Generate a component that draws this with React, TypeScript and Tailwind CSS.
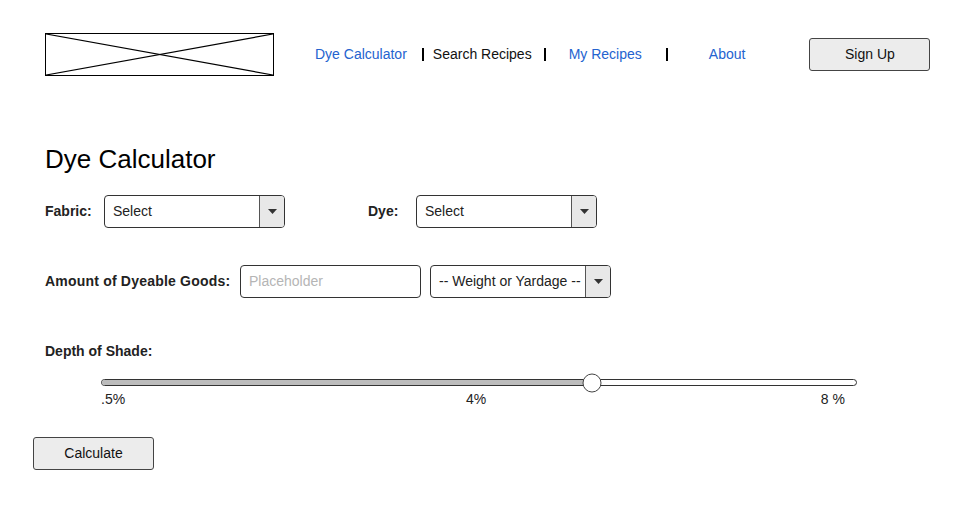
import React from "react";

const font = { fontFamily: '"Liberation Sans", Arial, sans-serif' };

function Caret() {
  return (
    <svg width="9" height="5" viewBox="0 0 9 5">
      <path d="M0 0 L9 0 L4.5 5 Z" fill="#333" />
    </svg>
  );
}

function Select({ label, width }: { label: string; width: string }) {
  return (
    <div className={`flex h-[33px] ${width} overflow-hidden rounded-[4px] border border-[#333] bg-white`}>
      <div className="flex flex-1 items-center overflow-hidden whitespace-nowrap pl-2 text-[14px] text-[#222]">{label}</div>
      <div className="flex w-[25px] shrink-0 items-center justify-center border-l border-[#555] bg-[#e8e8e8]">
        <Caret />
      </div>
    </div>
  );
}

export default function App() {
  return (
    <div className="relative h-[516px] w-[969px] bg-white text-black" style={font}>
      {/* header */}
      <div className="flex items-center pl-[45px] pt-[33px]">
        <div className="relative h-[43px] w-[229px] border border-black">
          <svg className="absolute inset-0" width="227" height="41" viewBox="0 0 227 41" preserveAspectRatio="none">
            <line x1="0" y1="0" x2="227" y2="41" stroke="#000" strokeWidth="1.2" />
            <line x1="0" y1="41" x2="227" y2="0" stroke="#000" strokeWidth="1.2" />
          </svg>
        </div>
        <div className="ml-[41px] flex items-center text-[14px]">
          <span className="text-[#2463cf]">Dye Calculator</span>
          <span className="ml-[15px] h-[13px] w-[2px] bg-black" />
          <span className="ml-[9px] text-[#111]">Search Recipes</span>
          <span className="ml-[12px] h-[13px] w-[2px] bg-black" />
          <span className="ml-[23px] text-[#2463cf]">My Recipes</span>
          <span className="ml-[24px] h-[13px] w-[2px] bg-black" />
          <span className="ml-[41px] text-[#2463cf]">About</span>
        </div>
        <button className="ml-[64px] flex h-[33px] w-[121px] items-center justify-center rounded-[3px] border border-[#444] bg-[#ececec] text-[14px] text-[#111]">
          Sign Up
        </button>
      </div>

      {/* main */}
      <div className="pl-[45px] pt-[68px]">
        <h1 className="text-[26px] leading-[30px] text-black">Dye Calculator</h1>

        <div className="mt-[21px] flex items-center">
          <span className="w-[59px] text-[14px] font-bold text-[#222]">Fabric:</span>
          <Select label="Select" width="w-[181px]" />
          <span className="ml-[83px] w-[48px] text-[14px] font-bold text-[#222]">Dye:</span>
          <Select label="Select" width="w-[181px]" />
        </div>

        <div className="mt-[37px] flex items-center">
          <span className="w-[195px] text-[14px] font-bold tracking-[0.2px] text-[#222]">Amount of Dyeable Goods:</span>
          <div className="flex h-[33px] w-[181px] items-center rounded-[4px] border border-[#333] bg-white pl-2 text-[14px] text-[#b5b5b5]">
            Placeholder
          </div>
          <div className="ml-[9px]">
            <Select label="-- Weight or Yardage --" width="w-[181px]" />
          </div>
        </div>

        <div className="mt-[43px] text-[14px] font-bold text-[#222]">Depth of Shade:</div>

        <div className="ml-[56px] mt-[17px] w-[756px]">
          <div className="relative h-[7px] w-full rounded-full border border-[#333] bg-white">
            <div className="h-full w-[65%] rounded-l-full bg-[#bcbcbc]" />
            <div className="absolute left-[65%] top-1/2 h-[19px] w-[19px] -translate-x-1/2 -translate-y-1/2 rounded-full border border-[#444] bg-white" />
          </div>
          <div className="mt-[3px] flex justify-between pr-[12px] text-[14px] text-[#222]">
            <span>.5%</span>
            <span className="ml-[6px]">4%</span>
            <span>8 %</span>
          </div>
        </div>
      </div>

      <button className="ml-[33px] mt-[27px] flex h-[33px] w-[121px] items-center justify-center rounded-[3px] border border-[#444] bg-[#ececec] text-[14px] text-[#111]">
        Calculate
      </button>
    </div>
  );
}
